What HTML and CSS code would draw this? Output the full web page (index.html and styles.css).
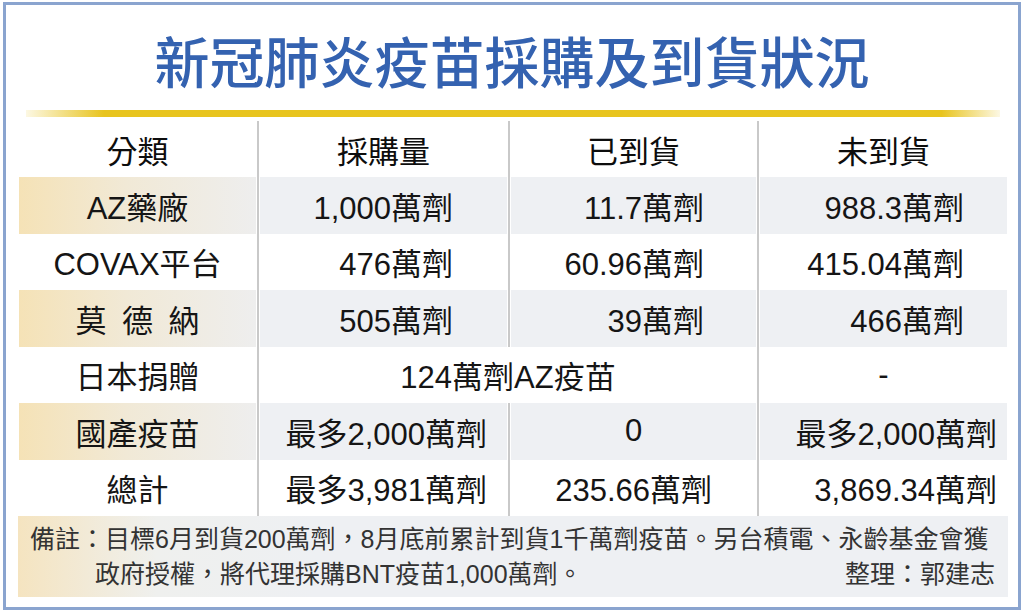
FILE: index.html
```html
<!DOCTYPE html>
<html lang="zh-Hant">
<head>
<meta charset="utf-8">
<title>新冠肺炎疫苗採購及到貨狀況</title>
<link rel="stylesheet" href="styles.css">
</head>
<body>
<div class="frame">
  <h1 class="title">新冠肺炎疫苗採購及到貨狀況</h1>
  <div class="rule"></div>
  <div class="table">
    <div class="row head">
      <div class="cell c0">分類</div>
      <div class="cell ctr">採購量</div>
      <div class="cell ctr">已到貨</div>
      <div class="cell ctr">未到貨</div>
    </div>
    <div class="row band">
      <div class="cell c0">AZ藥廠</div>
      <div class="cell c1">1,000萬劑</div>
      <div class="cell c2">11.7萬劑</div>
      <div class="cell c3">988.3萬劑</div>
    </div>
    <div class="row">
      <div class="cell c0">COVAX平台</div>
      <div class="cell c1">476萬劑</div>
      <div class="cell c2">60.96萬劑</div>
      <div class="cell c3">415.04萬劑</div>
    </div>
    <div class="row band">
      <div class="cell c0 spaced">莫 德 納</div>
      <div class="cell c1">505萬劑</div>
      <div class="cell c2">39萬劑</div>
      <div class="cell c3">466萬劑</div>
    </div>
    <div class="row">
      <div class="cell c0">日本捐贈</div>
      <div class="cell ctr span2">124萬劑AZ疫苗</div>
      <div class="cell ctr">-</div>
    </div>
    <div class="row band">
      <div class="cell c0">國產疫苗</div>
      <div class="cell c1w">最多2,000萬劑</div>
      <div class="cell ctr">0</div>
      <div class="cell c3w">最多2,000萬劑</div>
    </div>
    <div class="row">
      <div class="cell c0">總計</div>
      <div class="cell c1w">最多3,981萬劑</div>
      <div class="cell c2w">235.66萬劑</div>
      <div class="cell c3w">3,869.34萬劑</div>
    </div>
    <div class="notes">
      <div class="note-line">備註：目標6月到貨200萬劑，8月底前累計到貨1千萬劑疫苗。另台積電、永齡基金會獲</div>
      <div class="note-line second">
        <span>政府授權，將代理採購BNT疫苗1,000萬劑。</span>
        <span>整理：郭建志</span>
      </div>
    </div>
  </div>
</div>
</body>
</html>
```

FILE: styles.css
```css
* { box-sizing: border-box; }

html, body {
  margin: 0;
  padding: 0;
  background: #ffffff;
}

body {
  font-family: "Liberation Sans", "Noto Sans CJK TC", sans-serif;
  color: #151515;
}

.frame {
  margin: 2px 3px 0 3px;
  height: 608px;
  border: 3px solid #8aa4cf;
  background: #ffffff;
}

.title {
  margin: 0;
  height: 105px;
  line-height: 108px;
  text-align: center;
  font-family: "Noto Sans CJK TC", sans-serif;
  font-weight: 500;
  font-size: 55px;
  color: #3462b0;
  letter-spacing: 0;
}

.rule {
  height: 7px;
  margin: 0 18px 0 20px;
  background: linear-gradient(to right,
    rgba(233, 196, 30, 0.12) 0%,
    #e8c41e 8%,
    #e8c41e 94%,
    rgba(233, 196, 30, 0.12) 100%);
}

.table {
  margin: 4px 10px 0 12px;
}

.row {
  display: grid;
  grid-template-columns: 239px 251px 249px 251px;
  height: 56.5px;
  font-size: 31px;
}

.row.head {
  height: 56px;
  color: #0d0d0d;
}

.cell {
  display: flex;
  align-items: center;
  justify-content: flex-end;
  white-space: nowrap;
}

.cell + .cell {
  border-left: 2px solid #c9c9c9;
}

.band .cell {
  background: #eef0f3;
  box-shadow: inset 1px 0 0 #ffffff, inset -1px 0 0 #ffffff;
}

.band .c0 {
  background: linear-gradient(to right, #f5e2b6 0%, #f1e9d6 45%, #eeeeee 100%);
}

.c0, .ctr {
  justify-content: center;
}

.span2 {
  grid-column: span 2;
}

.spaced {
  word-spacing: 7px;
}

.c1 { padding-right: 55px; }
.c1w { justify-content: flex-end; padding-right: 21px; }
.c2 { padding-right: 53px; }
.c2w { justify-content: flex-end; padding-right: 45px; }
.c3 { padding-right: 44px; }
.c3w { justify-content: flex-end; padding-right: 11px; }

.notes {
  height: 81px;
  padding: 6px 13px 0 12px;
  background: linear-gradient(to right, #f5e4c0 0%, #eff0ee 14%, #eef0f3 30%);
  font-size: 25px;
  line-height: 35px;
  color: #333333;
  white-space: nowrap;
}

.note-line.second {
  display: flex;
  justify-content: space-between;
  padding-left: 65px;
}
```
